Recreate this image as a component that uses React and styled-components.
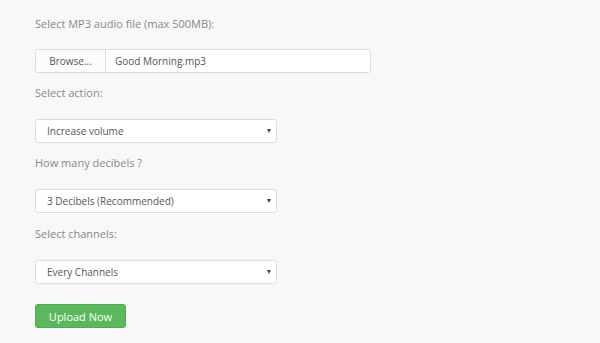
import React from "react";
import styled, { createGlobalStyle } from "styled-components";

const Global = createGlobalStyle`
  html, body { margin: 0; padding: 0; background: #f8f8f8; }
  body { font-family: "Open Sans", "Liberation Sans", sans-serif; }
`;

const Form = styled.div`
  display: flex;
  flex-direction: column;
  padding: 16px 0 0 35px;
  width: 600px;
  height: 343px;
  box-sizing: border-box;
  background: #f8f8f8;
`;

const Group = styled.div`
  display: flex;
  flex-direction: column;
  align-items: flex-start;
  margin-bottom: ${(p) => p.$mb}px;
`;

const Label = styled.div`
  font-size: 11px;
  line-height: 16px;
  color: #888;
  margin-bottom: ${(p) => p.$mb ?? 18}px;
`;

const FileBox = styled.div`
  display: flex;
  width: 336px;
  height: 24px;
  box-sizing: border-box;
  border: 1px solid #dcdcdc;
  border-radius: 3px;
  background: #fff;
  overflow: hidden;
`;

const BrowseBtn = styled.div`
  width: 69px;
  flex: none;
  display: flex;
  align-items: center;
  justify-content: center;
  border-right: 1px solid #dcdcdc;
  background: #fcfcfc;
  font-size: 10px;
  color: #555;
`;

const FileName = styled.div`
  display: flex;
  align-items: center;
  padding-left: 9px;
  font-size: 10px;
  color: #555;
`;

const SelectBox = styled.div`
  display: flex;
  align-items: center;
  justify-content: space-between;
  width: 242px;
  height: 24px;
  box-sizing: border-box;
  padding: 0 5px 0 11px;
  border: 1px solid #dcdcdc;
  border-radius: 3px;
  background: #fff;
  font-size: 10px;
  color: #555;
`;

const Arrow = styled.span`
  width: 0;
  height: 0;
  border-left: 2.5px solid transparent;
  border-right: 2.5px solid transparent;
  border-top: 4px solid #444;
`;

const UploadBtn = styled.div`
  width: 91px;
  height: 24px;
  box-sizing: border-box;
  display: flex;
  align-items: center;
  justify-content: center;
  background: #5cb85c;
  border: 1px solid #4cae4c;
  border-radius: 3px;
  color: #fff;
  font-size: 11px;
`;

const Select = ({ value }) => (
  <SelectBox>
    <span>{value}</span>
    <Arrow />
  </SelectBox>
);

export default function App() {
  return (
    <>
      <Global />
      <Form>
        <Group $mb={12}>
          <Label $mb={17}>Select MP3 audio file (max 500MB):</Label>
          <FileBox>
            <BrowseBtn>Browse...</BrowseBtn>
            <FileName>Good Morning.mp3</FileName>
          </FileBox>
        </Group>
        <Group $mb={12}>
          <Label>Select action:</Label>
          <Select value="Increase volume" />
        </Group>
        <Group $mb={13}>
          <Label>How many decibels ?</Label>
          <Select value="3 Decibels (Recommended)" />
        </Group>
        <Group $mb={20}>
          <Label>Select channels:</Label>
          <Select value="Every Channels" />
        </Group>
        <UploadBtn>Upload Now</UploadBtn>
      </Form>
    </>
  );
}
